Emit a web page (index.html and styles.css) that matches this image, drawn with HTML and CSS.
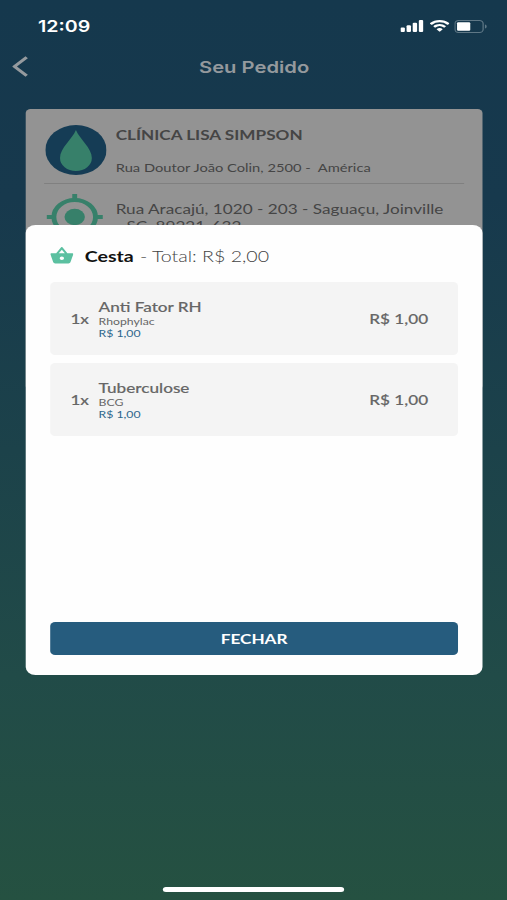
FILE: index.html
```html
<!DOCTYPE html>
<html lang="pt-BR">
  <head>
    <meta charset="UTF-8" />
    <meta name="viewport" content="width=device-width, initial-scale=1.0" />
    <title>Seu Pedido</title>
    <link rel="stylesheet" href="styles.css">
  </head>
  <body>
    <div class="screen">
      <div class="status-bar">
        <span class="time">12:09</span>
        <div class="status-icons">
          <svg class="signal" viewBox="0 0 19 12">
            <rect x="0" y="7.5" width="3.6" height="4.5" rx="1"></rect>
            <rect x="5" y="5.3" width="3.6" height="6.7" rx="1"></rect>
            <rect x="10" y="2.8" width="3.6" height="9.2" rx="1"></rect>
            <rect x="15" y="0" width="3.6" height="12" rx="1"></rect>
          </svg>
          <svg class="wifi" viewBox="0 0 16 12">
            <path d="M8 0C5 0 2.3 1.1.2 3.1c-.2.2-.2.4 0 .6l1 1c.2.2.4.2.6 0a9 9 0 0 1 12.4 0c.2.2.4.2.6 0l1-1c.2-.2.2-.4 0-.6A11.3 11.3 0 0 0 8 0z"></path>
            <path d="M8 4.1c-1.900 0-3.700.7-5 1.900-.2.2-.2.4 0 .6l1 1c.2.2.4.2.6 0a5 5 0 0 1 6.800 0c.2.2.4.2.6 0l1-1c.2-.2.2-.4 0-.6A7.400 7.400 0 0 0 8 4.100z"></path>
            <path d="M8 8.100c-.9 0-1.700.3-2.300.8-.2.2-.2.4 0 .6L7.700 11.600c.2.2.4.2.6 0l2-2.100c.2-.2.2-.4 0-.6A3.500 3.500 0 0 0 8 8.100z"></path>
          </svg>
          <svg class="battery" viewBox="0 0 27 13">
            <rect class="battery-case" x=".5" y=".5" width="23" height="12" rx="3"></rect>
            <path class="battery-tip" d="M25 4.500v4c.9-.3 1.400-1.100 1.400-2s-.5-1.700-1.400-2z"></path>
            <rect x="2.2" y="2.2" width="10.8" height="8.600" rx="1"></rect>
          </svg>
        </div>
      </div>

      <header class="nav">
        <svg class="back" viewBox="0 0 13 21">
          <polyline points="11.800 1.200 1.800 10.500 11.800 19.800"></polyline>
        </svg>
        <h1>Seu Pedido</h1>
      </header>

      <section class="order">
        <div class="order-row clinic">
          <svg class="clinic-icon" viewBox="0 0 50 50">
            <circle cx="25" cy="25" r="25"></circle>
            <path d="M25 5C22 14 12 23 12 33a13 13 0 0 0 26 0C38 23 28 14 25 5z"></path>
          </svg>
          <div class="order-text">
            <h2>CLÍNICA LISA SIMPSON</h2>
            <p>Rua Doutor João Colin, 2500 -&nbsp; América</p>
          </div>
        </div>
        <div class="order-row address">
          <svg class="target-icon" viewBox="0 0 46 46">
            <circle class="ring" cx="23" cy="23" r="17"></circle>
            <circle cx="23" cy="23" r="8.300"></circle>
            <path class="ring" d="M23 0v7M23 39v7M0 23h7M39 23h7"></path>
          </svg>
          <p>Rua Aracajú, 1020 - 203 - Saguaçu, Joinville<br>- SC, 89221-632</p>
        </div>
      </section>

      <div class="modal">
        <div class="modal-title">
          <svg class="basket" viewBox="0 0 20 18">
            <path fill-rule="evenodd" d="M19 6.500h-4.200L10.700.5a.9.900 0 0 0-1.500 0L5.100 6.500H1c-.6 0-1 .5-.9 1.200L2.500 16c.2.900 1 1.500 1.800 1.500h11.400c.8 0 1.600-.6 1.800-1.500l2.400-8.300c.1-.7-.3-1.200-.9-1.200zM10 2.800l2.600 3.700H7.300zM10 13.800a1.900 1.900 0 1 1 0-3.800 1.900 1.900 0 0 1 0 3.800z"></path>
          </svg>
          <strong>Cesta</strong>
          <span class="total">- Total: R$ 2,00</span>
        </div>

        <div class="item">
          <span class="qty">1x</span>
          <div class="item-info">
            <h3>Anti Fator RH</h3>
            <p>Rhophylac</p>
            <p class="unit">R$ 1,00</p>
          </div>
          <span class="price">R$ 1,00</span>
        </div>
        <div class="item">
          <span class="qty">1x</span>
          <div class="item-info">
            <h3>Tuberculose</h3>
            <p>BCG</p>
            <p class="unit">R$ 1,00</p>
          </div>
          <span class="price">R$ 1,00</span>
        </div>

        <button class="close">FECHAR</button>
      </div>

      <div class="home-indicator"></div>
    </div>
  </body>
</html>
```

FILE: styles.css
```css
* {
  margin: 0;
  padding: 0;
  box-sizing: border-box;
}

body {
  width: 507px;
  height: 900px;
  overflow: hidden;
  font-family: Lato, "Liberation Sans", sans-serif;
}

/* 414pt wide layout, widened to fill the window */
.screen {
  position: relative;
  width: 414px;
  height: 900px;
  display: flex;
  flex-direction: column;
  background: linear-gradient(180deg, #15384d 0%, #17394d 22%, #1c424a 50%, #214b48 75%, #255141 100%);
  transform: scaleX(1.22464);
  transform-origin: 0 0;
}

.status-bar {
  height: 52px;
  padding: 0 16px 0 31px;
  display: flex;
  justify-content: space-between;
  align-items: center;
  color: #ffffff;
}

.time {
  font-family: Inter, sans-serif;
  font-size: 16px;
  font-weight: 600;
}

.status-icons {
  display: flex;
  align-items: center;
  gap: 4.5px;
  fill: #ffffff;
}

.signal {
  width: 19px;
  height: 12px;
}

.wifi {
  width: 16px;
  height: 12px;
}

.battery {
  width: 27px;
  height: 13px;
}

.battery-case {
  fill: none;
  stroke: #5f7886;
}

.battery-tip {
  fill: #5f7886;
}

.nav {
  height: 57px;
  padding-top: 4px;
  display: flex;
  align-items: flex-start;
}

.back {
  width: 13px;
  height: 21px;
  margin-left: 10px;
  fill: none;
  stroke: #959a9e;
  stroke-width: 2.8;
}

.nav h1 {
  flex: 1;
  padding-right: 22px;
  font-family: Inter, sans-serif;
  font-size: 16.5px;
  font-weight: 600;
  line-height: 22px;
  text-align: center;
  color: #94999d;
}

.order {
  width: 373.4px;
  height: 281px;
  margin-left: 20.5px;
  padding: 0 15px 0 15.5px;
  border-radius: 4px;
  background: #939393;
  color: #454545;
}

.order-row {
  display: flex;
}

.clinic {
  height: 75px;
  padding-top: 16px;
  border-bottom: 1px solid #808080;
}

.clinic-icon {
  width: 50px;
  height: 50px;
  margin-left: 0.5px;
  fill: #153c55;
}

.clinic-icon path {
  fill: #37806a;
}

.order-text {
  margin: 1px 0 0 8px;
}

.order-text h2 {
  font-size: 14px;
  font-weight: 700;
  line-height: 18px;
}

.order-text p {
  margin-top: 16px;
  font-size: 12px;
  line-height: 15px;
}

.address {
  padding: 10px 0 0 1.5px;
}

.target-icon {
  width: 46px;
  height: 46px;
  fill: #37806a;
}

.target-icon .ring {
  fill: none;
  stroke: #37806a;
  stroke-width: 4;
}

.address p {
  margin: 6px 0 0 11px;
  font-size: 14px;
  line-height: 17px;
  white-space: nowrap;
}

.modal {
  position: absolute;
  top: 225px;
  left: 21.2px;
  width: 372.4px;
  height: 450px;
  padding: 17px 20px 20px 20.3px;
  display: flex;
  flex-direction: column;
  border-radius: 8px;
  background: #fefefe;
}

.modal-title {
  height: 26px;
  margin-bottom: 14px;
  display: flex;
  align-items: center;
  font-size: 16px;
  color: #111111;
}

.basket {
  width: 19px;
  height: 17px;
  margin-right: 8.7px;
  fill: #5bc0a0;
}

.total {
  margin-left: 5px;
  font-weight: 300;
  color: #444444;
}

.item {
  height: 73px;
  margin-bottom: 8px;
  padding: 0 24px 0 16px;
  display: flex;
  align-items: center;
  border-radius: 4px;
  background: #f4f4f4;
  color: #666666;
}

.qty,
.price,
.item-info h3 {
  font-size: 14px;
  font-weight: 500;
  -webkit-text-stroke: 0.15px #666666;
}

.qty {
  width: 23px;
}

.item-info {
  flex: 1;
}

.item-info h3 {
  line-height: 17px;
}

.item-info p {
  font-size: 10px;
  line-height: 12px;
}

.item-info .unit {
  color: #2d678c;
}

.close {
  height: 33px;
  margin-top: auto;
  border: none;
  border-radius: 4px;
  background: #265c7e;
  color: #ffffff;
  font-family: inherit;
  font-size: 14px;
  font-weight: 700;
}

.home-indicator {
  width: 148px;
  height: 5px;
  margin: auto auto 8px;
  border-radius: 3px;
  background: #ffffff;
}
```
